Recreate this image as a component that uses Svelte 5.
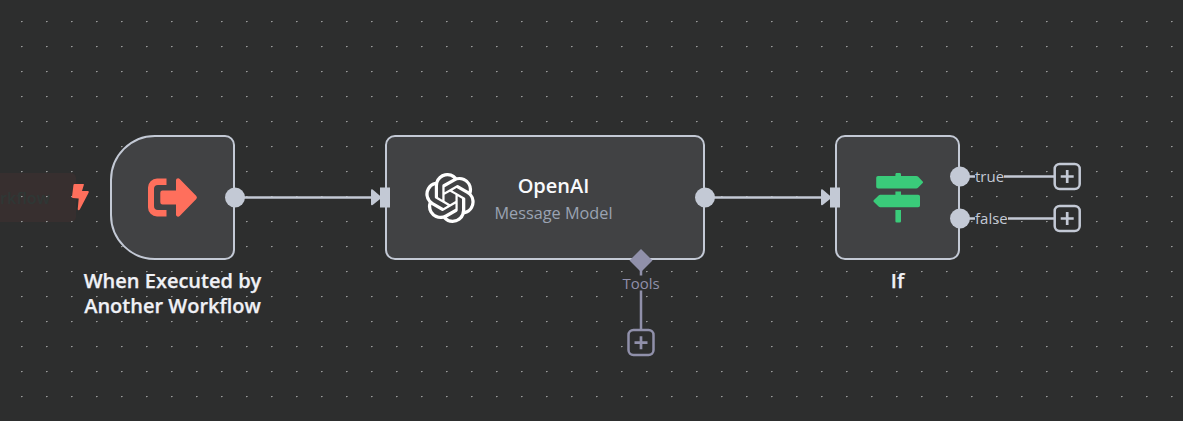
<script>
  const nodes = [
    { id: 'trigger', x: 110, y: 135, w: 125, label: ['When Executed by', 'Another Workflow'] },
    { id: 'openai', x: 385, y: 135, w: 320, title: 'OpenAI', subtitle: 'Message Model' },
    { id: 'branch', x: 835, y: 135, w: 125, label: ['If'] }
  ];
  const edges = [
    { from: 244, to: 373, y: 197.5 },
    { from: 714, to: 823, y: 197.5 }
  ];
  const circles = [[235, 197.5], [705, 197.5], [960, 176.5], [960, 218.5]];
  const inputs = [380, 830];
  const outputs = [
    { text: 'true', y: 176.5, resume: 1004 },
    { text: 'false', y: 218.5, resume: 1008 }
  ];
</script>

<main class="canvas">
  <div class="run">rkflow</div>

  <svg class="layer" width="1183" height="421">
    <defs>
      <pattern id="grid" x="21" y="21" width="25" height="25" patternUnits="userSpaceOnUse">
        <rect width="1" height="1" fill="#9a9b9b" />
        <rect x="1" width="1" height="1" fill="#727373" />
        <rect y="1" width="1" height="1" fill="#434444" />
      </pattern>
    </defs>
    <rect width="1183" height="421" fill="url(#grid)" />
    <path d="M74.500 184h8.800q.8 0 .6.800L82 191h6q1.200.2.7 1.400l-8.900 17.200q-1.300 1.200-2.100-.1l1-10.900-6-.6q-.8-.2-.7-1.200l1.500-12q.2-.8 1-.8z" fill="#ff6f5c" />
  </svg>

  {#each nodes as node (node.id)}
    <section class="node {node.id}" style="left:{node.x}px;top:{node.y}px;width:{node.w}px">
      {#if node.id === 'trigger'}
        <svg class="icon" width="50" height="50" viewBox="0.500 0.500 50 50" fill="#ff6f5c">
          <path d="M19 6H9.500A9 9 0 0 0 .5 15v20a9 9 0 0 0 9 9H19v-6.500h-8.500a4 4 0 0 1-4-4v-17a4 4 0 0 1 4-4H19z" />
          <path d="M15 18h13.500V8c0-2.100 2.300-2.900 3.700-1.500L48.800 23.400q1.300 1.600 0 3.200L32.200 43.500c-1.400 1.400-3.700.6-3.700-1.500V32H15a2.200 2.200 0 0 1-2.200-2.200v-9.600A2.200 2.200 0 0 1 15 18z" />
        </svg>
      {:else if node.id === 'openai'}
        <svg class="icon" width="50" height="50" viewBox="0 0 24 24" fill="#fff">
          <path d="M22.2819 9.8211a5.9847 5.9847 0 0 0-.5157-4.9108 6.0462 6.0462 0 0 0-6.5098-2.9A6.0651 6.0651 0 0 0 4.9807 4.1818a5.9847 5.9847 0 0 0-3.9977 2.9 6.0462 6.0462 0 0 0 .7427 7.0966 5.98 5.98 0 0 0 .511 4.9107 6.051 6.051 0 0 0 6.5146 2.9001A5.9847 5.9847 0 0 0 13.2599 24a6.0557 6.0557 0 0 0 5.7718-4.2058 5.9894 5.9894 0 0 0 3.9977-2.9001 6.0557 6.0557 0 0 0-.7475-7.0729zm-9.022 12.6081a4.4755 4.4755 0 0 1-2.8764-1.0408l.1419-.0804 4.7783-2.7582a.7948.7948 0 0 0 .3927-.6813v-6.7369l2.02 1.1686a.071.071 0 0 1 .038.052v5.5826a4.504 4.504 0 0 1-4.4945 4.4944zm-9.6607-4.1254a4.4708 4.4708 0 0 1-.5346-3.0137l.142.0852 4.783 2.7582a.7712.7712 0 0 0 .7806 0l5.8428-3.3685v2.3324a.0804.0804 0 0 1-.0332.0615L9.74 19.9502a4.4992 4.4992 0 0 1-6.1408-1.6464zM2.3408 7.8956a4.485 4.485 0 0 1 2.3655-1.9728V11.6a.7664.7664 0 0 0 .3879.6765l5.8144 3.3543-2.0201 1.1685a.0757.0757 0 0 1-.071 0l-4.8303-2.7865A4.504 4.504 0 0 1 2.3408 7.872zm16.5963 3.8558L13.1038 8.364 15.1192 7.2a.0757.0757 0 0 1 .071 0l4.8303 2.7913a4.4944 4.4944 0 0 1-.6765 8.1042v-5.6772a.79.79 0 0 0-.407-.667zm2.0107-3.0231l-.142-.0852-4.7735-2.7818a.7759.7759 0 0 0-.7854 0L9.409 9.2297V6.8974a.0662.0662 0 0 1 .0284-.0615l4.8303-2.7866a4.4992 4.4992 0 0 1 6.6802 4.66zM8.3065 12.863l-2.02-1.1638a.0804.0804 0 0 1-.038-.0567V6.0742a4.4992 4.4992 0 0 1 7.3757-3.4537l-.142.0805L8.704 5.459a.7948.7948 0 0 0-.3927.6813zm1.0976-2.3654l2.602-1.4998 2.6069 1.4998v2.9994l-2.5974 1.4997-2.6067-1.4997Z" />
        </svg>
        <div class="text">
          <div class="title">{node.title}</div>
          <div class="subtitle">{node.subtitle}</div>
        </div>
      {:else}
        <svg class="icon" width="50" height="50" viewBox="0 0.300 50 50" fill="#3acb7a">
          <path d="M22.4 3.2V1.7Q22.4.2 23.9.2h2.6Q28 .2 28 1.7v1.5h15.3q1 0 1.7.7l4.7 4.8q.7.8 0 1.6L45 15.1q-.7.7-1.7.7H5q-1.8 0-1.8-1.8V5Q3.200 3.200 5 3.200z" />
          <path d="M22.400 18.800H28V22h17.200q1.800 0 1.800 1.800v9q0 1.800-1.800 1.800H7.300q-1 0-1.700-.7L.7 29.100q-.7-.8 0-1.600l4.900-4.800q.7-.7 1.700-.7h15.100z" />
          <path d="M22.400 37.400H28v11.200q0 1.300-1.300 1.300h-3q-1.300 0-1.300-1.300z" />
        </svg>
      {/if}
    </section>
    {#if node.label}
      <div class="label" style="left:{node.x + node.w / 2 - 110}px">
        {#each node.label as line}<div>{line}</div>{/each}
      </div>
    {/if}
  {/each}

  <svg class="layer" width="1183" height="421">
    <g stroke="#c3c9d5" stroke-width="2.5" fill="none">
      {#each edges as e}
        <path d="M{e.from} {e.y}H{e.to}" />
      {/each}
      {#each outputs as o}
        <path d="M969 {o.y}H975M{o.resume} {o.y}H1054" />
      {/each}
    </g>
    <g fill="#c3c9d5">
      {#each inputs as x}
        <path d="M{x - 9} 190.500q0-1.600 1.600-1l9.400 8-9.400 7.600q-1.600.7-1.600-.8z" />
        <rect {x} y="187.500" width="10" height="20" />
      {/each}
      {#each circles as [cx, cy]}
        <circle {cx} {cy} r="10" />
      {/each}
    </g>
    {#each outputs as o}
      <g stroke="#c3c9d5" stroke-width="2.500" fill="none">
        <rect x="1054.700" y={o.y - 12.5} width="25" height="25" rx="5" fill="#2d2e2e" />
        <path d="M1060.700 {o.y}h13M1067.200 {o.y - 6.5}v13" stroke-width="2.700" />
      </g>
      <text x="975" y={o.y + 5.5} class="port" fill="#c3c9d5">{o.text}</text>
    {/each}
    <g stroke="#9090aa" stroke-width="2.500" fill="none">
      <path d="M641 268v7.500M641 290.500V329" />
      <rect x="628.500" y="330" width="25" height="25" rx="5" fill="#2d2e2e" />
      <path d="M634.500 342.700h13M641 336.200v13" stroke-width="2.700" />
    </g>
    <path d="M641 249l11.500 11.500L641 272l-11.500-11.500z" fill="#9090aa" />
    <text x="641" y="289" class="port" text-anchor="middle" fill="#9090aa">Tools</text>
  </svg>
</main>

<style>
  :global(body) { margin: 0; background: #2d2e2e; }
  .canvas {
    position: relative;
    width: 1183px;
    height: 421px;
    overflow: hidden;
    background: #2d2e2e;
    font-family: 'Open Sans', sans-serif;
  }
  .layer { position: absolute; inset: 0; display: block; }
  .node {
    position: absolute;
    box-sizing: border-box;
    height: 125px;
    display: flex;
    align-items: center;
    justify-content: center;
    border: 2px solid #c3c9d5;
    border-radius: 10px;
    background: #414244;
  }
  .trigger { border-radius: 45px 10px 10px 45px; }
  .openai { justify-content: flex-start; padding-left: 37.5px; }
  .icon { flex: none; display: block; }
  .text { margin-left: 20px; padding-top: 4px; text-align: center; }
  .title { font-size: 20px; font-weight: 600; line-height: 25px; color: #f8f9fc; }
  .subtitle { margin-top: 3px; font-size: 16.25px; line-height: 25px; color: #9aa3b2; white-space: nowrap; }
  .label {
    position: absolute;
    top: 268px;
    width: 220px;
    text-align: center;
    font-size: 20px;
    font-weight: 600;
    line-height: 25px;
    color: #f0f1f6;
    -webkit-text-stroke: 0.25px #f0f1f6;
  }
  .run {
    position: absolute;
    left: 0;
    top: 173px;
    width: 76px;
    height: 49px;
    box-sizing: border-box;
    padding-right: 26px;
    display: flex;
    align-items: center;
    justify-content: flex-end;
    border-radius: 0 5px 5px 0;
    background: #372f2f;
    color: #2f3735;
    font-size: 16.25px;
    font-weight: 600;
  }
  .port { font-size: 15px; }
</style>
